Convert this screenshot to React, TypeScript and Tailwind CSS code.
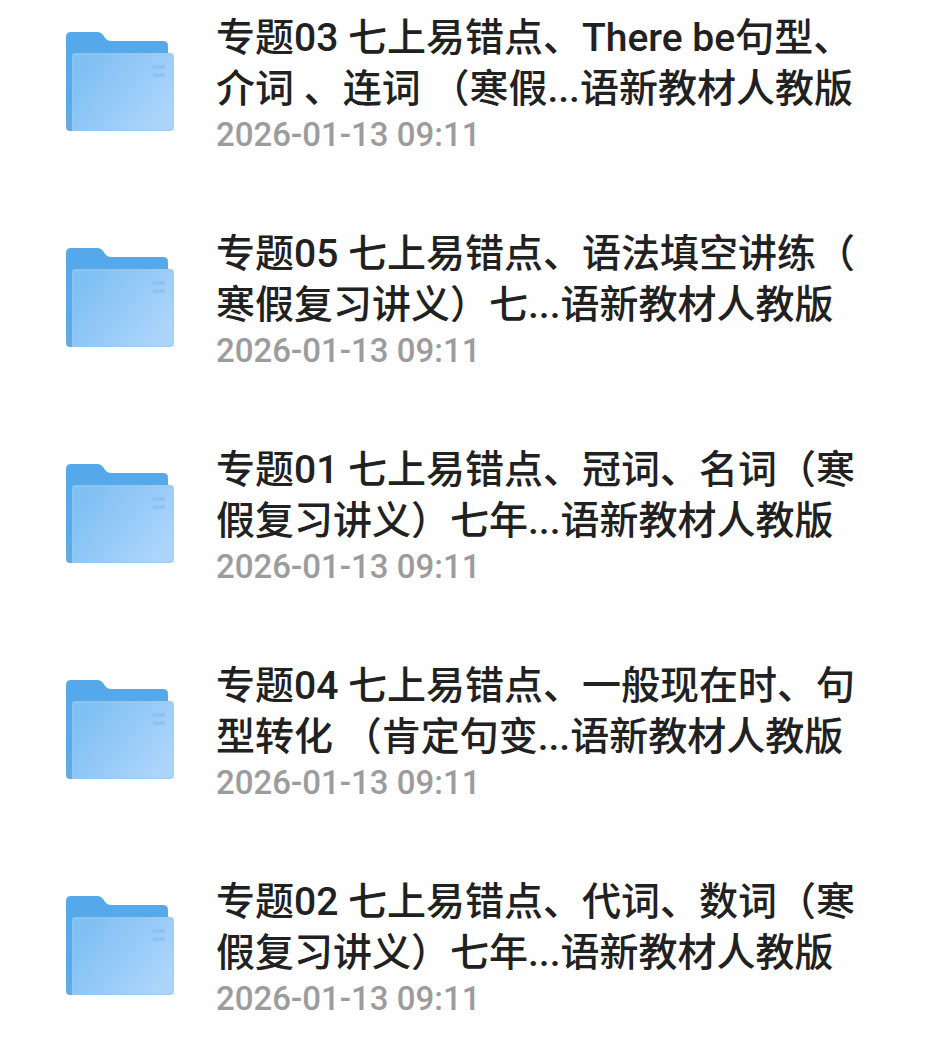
type Folder = {
  id: string;
  lines: [string, string];
  date: string;
};

const folders: Folder[] = [
  {
    id: "03",
    lines: ["专题03 七上易错点、There be句型、", "介词 、连词 （寒假...语新教材人教版"],
    date: "2026-01-13 09:11",
  },
  {
    id: "05",
    lines: ["专题05 七上易错点、语法填空讲练（", "寒假复习讲义）七...语新教材人教版"],
    date: "2026-01-13 09:11",
  },
  {
    id: "01",
    lines: ["专题01 七上易错点、冠词、名词（寒", "假复习讲义）七年...语新教材人教版"],
    date: "2026-01-13 09:11",
  },
  {
    id: "04",
    lines: ["专题04 七上易错点、一般现在时、句", "型转化 （肯定句变...语新教材人教版"],
    date: "2026-01-13 09:11",
  },
  {
    id: "02",
    lines: ["专题02 七上易错点、代词、数词（寒", "假复习讲义）七年...语新教材人教版"],
    date: "2026-01-13 09:11",
  },
];

function FolderIcon({ id }: { id: string }) {
  const back = `back-${id}`;
  const front = `front-${id}`;

  return (
    <svg
      className="mt-[19px] h-[99px] w-[108px] shrink-0"
      viewBox="0 0 108 99"
      fill="none"
      aria-hidden="true"
    >
      <defs>
        <linearGradient id={back} x1="0" y1="0" x2="0" y2="99" gradientUnits="userSpaceOnUse">
          <stop stopColor="#55a9ea" />
          <stop offset="0.7" stopColor="#57abeb" />
          <stop offset="1" stopColor="#68acdf" />
        </linearGradient>
        <linearGradient id={front} x1="18" y1="36" x2="90" y2="92" gradientUnits="userSpaceOnUse">
          <stop stopColor="#80c0f3" />
          <stop offset="0.45" stopColor="#93c9f7" />
          <stop offset="1" stopColor="#abd5fb" />
        </linearGradient>
      </defs>
      <path
        d="M0 5Q0 0 5 0H31Q35 0 37 3L40 7Q42 9 45 9H97Q102 9 102 14V99H4Q0 99 0 95Z"
        fill={`url(#${back})`}
      />
      <path
        d="M6 24Q6 21 9 21H104Q108 21 108 25V95Q108 99 104 99H6Z"
        fill={`url(#${front})`}
      />
      <path d="M7 98V24Q7 22 9 22H104" stroke="#9acbf3" strokeOpacity="0.7" />
      <path d="M7 98H104Q107 98 107 95V25" stroke="#9bc8ed" strokeOpacity="0.7" />
      <path d="M87 35H99M87 43H99" stroke="#8dbfec" strokeOpacity="0.8" strokeWidth="4" />
    </svg>
  );
}

export default function App() {
  return (
    <main className="min-h-screen bg-[#fefefe] pt-[13px] font-['Roboto','Noto_Sans_CJK_SC',sans-serif]">
      <ul className="flex flex-col gap-[74px] pr-6 pl-[66px]">
        {folders.map((folder) => (
          <li key={folder.id} className="flex items-start gap-[42px]">
            <FolderIcon id={folder.id} />
            <div className="min-w-0 flex-1 font-medium whitespace-nowrap">
              <h2 className="text-[39px] leading-[51px] text-[#212121]" lang="zh-CN">
                {folder.lines.map((line) => (
                  <span key={line} className="block">
                    {line}
                  </span>
                ))}
              </h2>
              <time className="block text-[33px] leading-[40px] text-[#9c9c9c]">
                {folder.date}
              </time>
            </div>
          </li>
        ))}
      </ul>
    </main>
  );
}
